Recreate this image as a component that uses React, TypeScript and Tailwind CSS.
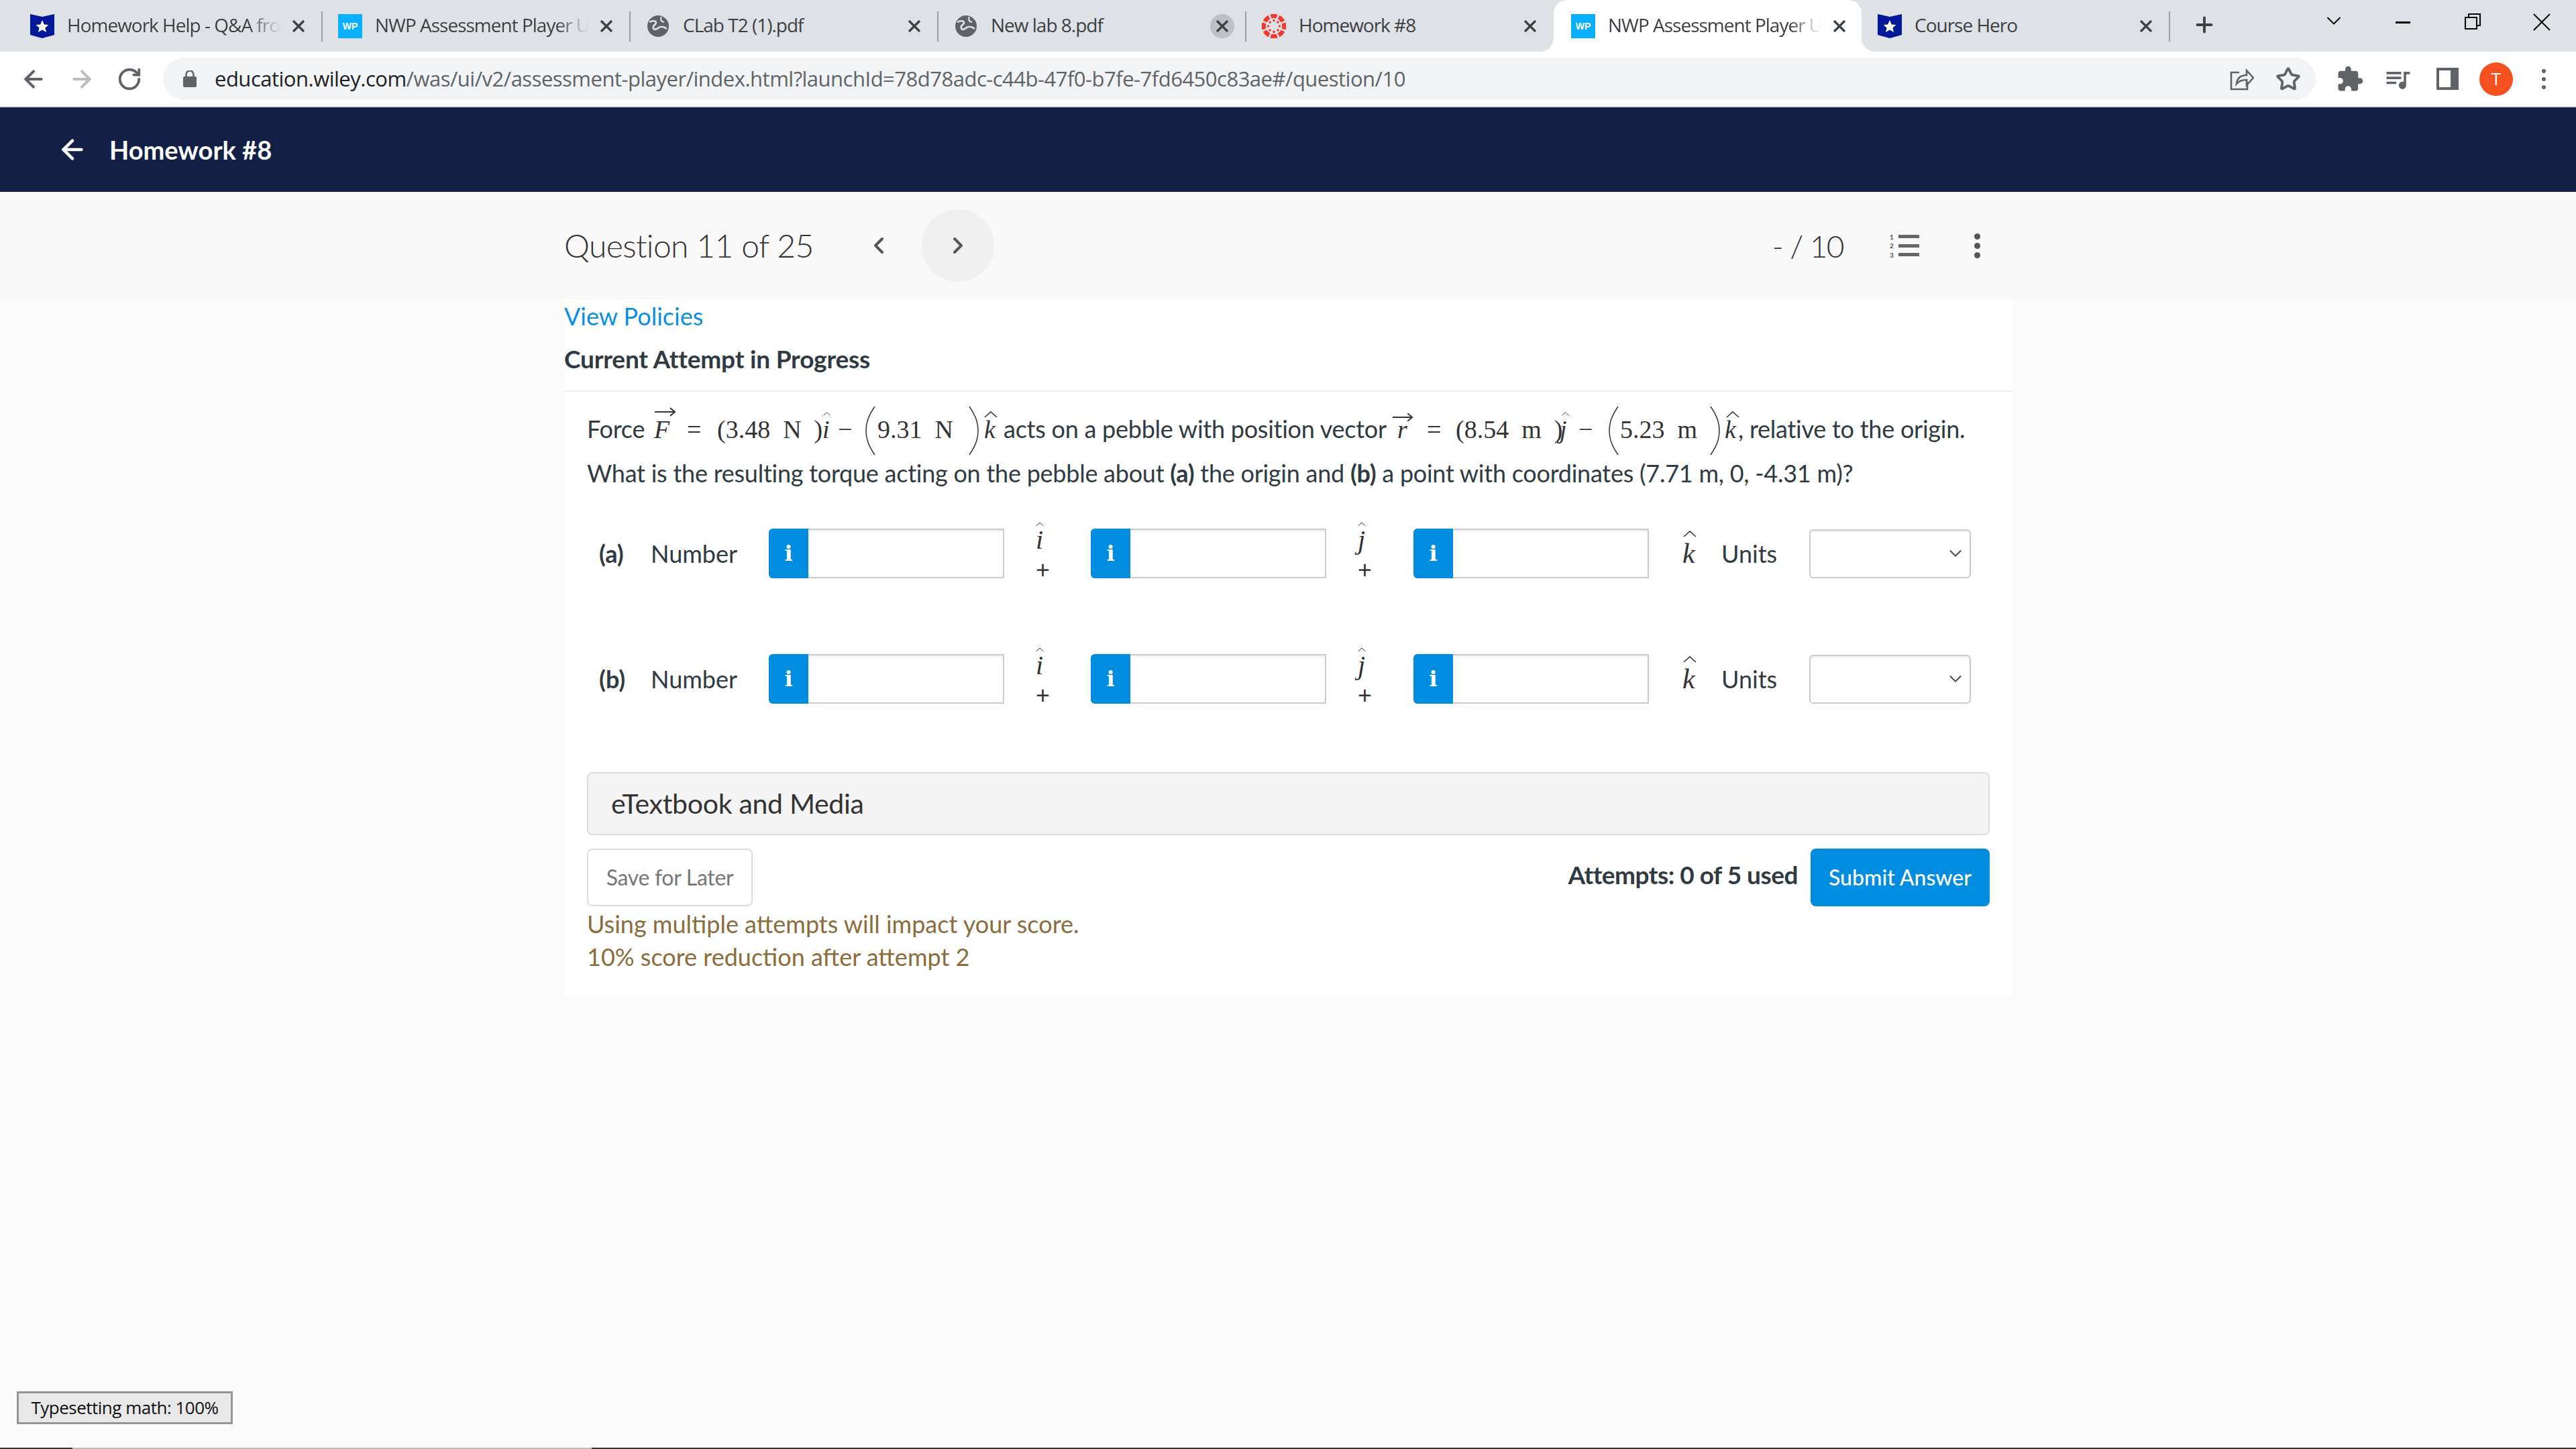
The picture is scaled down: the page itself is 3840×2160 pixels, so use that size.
import type { ReactNode } from 'react';
import { ArrowLeft, ArrowRight, ChevronDown, ChevronLeft, ChevronRight, Plus, RotateCw, Star } from 'lucide-react';
import { MdExtension, MdQueueMusic } from 'react-icons/md';

function Shield() {
  return (
    <svg viewBox="0 0 36 36" className="w-[36px] h-[36px] shrink-0">
      <polygon points="0,0 18,4 36,0 36,31 18,36 0,31" fill="#04189b" />
      <polygon points="18,9 20.8,15.4 27.5,16 22.4,20.4 24,27 18,23.5 12,27 13.6,20.4 8.5,16 15.2,15.4" fill="#fff" />
    </svg>
  );
}

function Wp() {
  return (
    <div className="w-[36px] h-[36px] shrink-0 bg-[#0ab0ff] flex items-center justify-center">
      <span className="text-white font-bold text-[14px] leading-none font-['Liberation_Sans',sans-serif]">WP</span>
    </div>
  );
}

function Globe() {
  return (
    <svg viewBox="0 0 32 32" className="w-[32px] h-[32px] ml-[2px] mr-[2px] shrink-0">
      <circle cx="16" cy="16" r="16" fill="#5f6368" />
      <path d="M3 10c5-3 10-2 10 1s-6 4-4 8c1 3 5 2 8-1 3-2 8-1 12 2" fill="none" stroke="#dee1e6" strokeWidth="2.6" />
      <path d="M21 2c-2 3-1 7 4 8" fill="none" stroke="#dee1e6" strokeWidth="2.2" />
    </svg>
  );
}

function Canvas() {
  const angles = [0, 45, 90, 135, 180, 225, 270, 315];
  return (
    <svg viewBox="-18 -18 36 36" className="w-[36px] h-[36px] shrink-0">
      {angles.map((a) => (
        <g key={a} transform={`rotate(${a})`}>
          <path d="M-5.5 -17.5 A18 18 0 0 1 5.5 -17.5 L3.6 -11.5 A12 12 0 0 0 -3.6 -11.5 Z" fill="#ee3a2f" />
          <circle cx="0" cy="-8.4" r="1.8" fill="#ee3a2f" />
        </g>
      ))}
    </svg>
  );
}

function CloseX() {
  return (
    <svg viewBox="0 0 20 20" className="w-[20px] h-[20px]">
      <path d="M2 2 18 18M18 2 2 18" stroke="#3c4043" strokeWidth="3.2" />
    </svg>
  );
}

function Tab({ icon, title, fade, active, hover, sep }: { icon: ReactNode; title: string; fade?: boolean; active?: boolean; hover?: boolean; sep?: boolean }) {
  return (
    <div className={active ? 'relative w-[459px] h-[77px] shrink-0 bg-white rounded-t-[20px] flex items-center pl-[26px]' : 'relative w-[459px] h-[77px] shrink-0 flex items-center pl-[24px]'}>
      {icon}
      <span className={fade ? "ml-[19px] pb-[3px] w-[318px] whitespace-nowrap text-[28px] tracking-[-1px] text-[#3c4043] [mask-image:linear-gradient(to_right,black_85%,transparent_100%)]" : 'ml-[19px] pb-[3px] w-[318px] whitespace-nowrap text-[28px] tracking-[-1px] text-[#3c4043]'}>
        {title}
      </span>
      <span className={hover ? 'ml-[9px] w-[36px] h-[36px] rounded-full bg-[#bdc1c6] flex items-center justify-center' : 'ml-[9px] w-[36px] h-[36px] flex items-center justify-center'}>
        <CloseX />
      </span>
      {sep && <span className="absolute right-[-1px] top-[17px] h-[45px] w-[2px] bg-[#9aa0a6]" />}
      {active && (
        <>
          <span className="absolute bottom-0 left-[-20px] w-[20px] h-[20px] bg-white">
            <span className="block w-full h-full bg-[#dee1e6] rounded-br-[20px]" />
          </span>
          <span className="absolute bottom-0 right-[-20px] w-[20px] h-[20px] bg-white">
            <span className="block w-full h-full bg-[#dee1e6] rounded-bl-[20px]" />
          </span>
        </>
      )}
    </div>
  );
}

function TabStrip() {
  return (
    <div className="h-[77px] bg-[#dee1e6] flex items-start pl-[21px] font-['Open_Sans',sans-serif]">
      <Tab icon={<Shield />} title="Homework Help - Q&A fro" fade sep />
      <Tab icon={<Wp />} title="NWP Assessment Player U" fade sep />
      <Tab icon={<Globe />} title="CLab T2 (1).pdf" sep />
      <Tab icon={<Globe />} title="New lab 8.pdf" hover sep />
      <Tab icon={<Canvas />} title="Homework #8" />
      <Tab icon={<Wp />} title="NWP Assessment Player U" fade active />
      <Tab icon={<Shield />} title="Course Hero" sep />
      <Plus className="ml-[34px] mt-[19px] w-[36px] h-[36px] text-[#3c4043]" strokeWidth={2.6} />
      <ChevronDown className="ml-[157px] mt-[13px] w-[36px] h-[36px] text-black" strokeWidth={1.3} />
      <div className="ml-[74px] mt-[32px] w-[22px] h-[3px] bg-black" />
      <svg viewBox="0 0 24 24" className="ml-[81px] mt-[20px] w-[24px] h-[24px]" fill="none" stroke="#000" strokeWidth="2">
        <rect x="1" y="6" width="17" height="17" />
        <path d="M6 6V1H23V18H18" />
      </svg>
      <svg viewBox="0 0 26 26" className="ml-[78px] mt-[20px] w-[26px] h-[26px]" stroke="#000" strokeWidth="2">
        <path d="M1 1 25 25M25 1 1 25" />
      </svg>
    </div>
  );
}

function Toolbar() {
  return (
    <div className="h-[83px] bg-white border-b-2 border-[#dadce0] flex items-start font-['Open_Sans',sans-serif]">
      <div className="flex items-center h-[81px] pl-[30px] gap-[32px] w-[243px]">
        <ArrowLeft className="w-[40px] h-[40px] text-[#5f6368]" strokeWidth={2.4} />
        <ArrowRight className="w-[40px] h-[40px] text-[#babcbe]" strokeWidth={2.4} />
        <RotateCw className="w-[38px] h-[38px] text-[#5f6368]" strokeWidth={2.4} />
      </div>
      <div className="mt-[9px] w-[3209px] h-[63px] bg-[#f1f3f4] rounded-full flex items-center pl-[30px]">
        <svg viewBox="0 0 20 25" className="w-[20px] h-[25px] shrink-0">
          <rect x="0" y="9" width="20" height="16" rx="2" fill="#5f6368" />
          <path d="M4.5 10V6a5.5 5.5 0 0 1 11 0v4" fill="none" stroke="#5f6368" strokeWidth="2.6" />
        </svg>
        <span className="ml-[27px] text-[31px] tracking-[-0.5px] text-[#5f6368] whitespace-nowrap">
          <span className="text-[#202124]">education.wiley.com</span>/was/ui/v2/assessment-player/index.html?launchId=78d78adc-c44b-47f0-b7fe-7fd6450c83ae#/question/10
        </span>
        <svg viewBox="0 0 36 34" className="ml-auto w-[36px] h-[34px]" fill="none" stroke="#5f6368" strokeWidth="2.6">
          <path d="M14 7H2V32H26V21" />
          <path d="M10 24c1-9 7-13 15-13V4l10 11-10 11v-8c-6 0-11 1-15 6Z" />
        </svg>
        <Star className="ml-[32px] mr-[22px] w-[38px] h-[38px] text-[#5f6368]" strokeWidth={2.4} />
      </div>
      <div className="flex items-center h-[81px] pl-[30px]">
        <MdExtension className="w-[42px] h-[42px] text-[#5f6368]" />
        <MdQueueMusic className="ml-[28px] w-[44px] h-[44px] text-[#5f6368]" />
        <div className="ml-[36px] w-[33px] h-[33px] border-[4px] border-r-[12px] border-[#5f6368] bg-white" />
        <div className="ml-[31px] w-[50px] h-[50px] rounded-full bg-[#f4511e] flex items-center justify-center text-white text-[26px]">T</div>
        <div className="ml-[43px] flex flex-col gap-[6px]">
          <span className="w-[6px] h-[6px] rounded-full bg-[#5f6368]" />
          <span className="w-[6px] h-[6px] rounded-full bg-[#5f6368]" />
          <span className="w-[6px] h-[6px] rounded-full bg-[#5f6368]" />
        </div>
      </div>
    </div>
  );
}

function NavBar() {
  return (
    <div className="h-[126px] bg-[#141f45] flex items-center pl-[85px] text-white">
      <ArrowLeft className="w-[46px] h-[46px]" strokeWidth={2.4} />
      <span className="ml-[32px] text-[38px] font-bold">Homework #8</span>
    </div>
  );
}

function QuestionHeader() {
  return (
    <div className="h-[160px] bg-[#f8f8f8]">
      <div className="ml-[841px] w-[2159px] h-full flex items-center text-[#4a4a4a]">
        <span className="text-[48px] font-light text-[#333] tracking-[-0.6px]">Question 11 of 25</span>
        <ChevronLeft className="ml-[77px] w-[40px] h-[40px] text-[#555]" strokeWidth={2.4} />
        <div className="ml-[44px] w-[108px] h-[108px] rounded-full bg-[#f0f0f0] flex items-center justify-center">
          <ChevronRight className="w-[40px] h-[40px] text-[#555]" strokeWidth={2.4} />
        </div>
        <span className="ml-auto text-[46px] font-light text-[#333] tracking-[-1.5px]">- / 10</span>
        <div className="ml-[69px] w-[44px] h-[36px] flex flex-col justify-between">
          {['1', '2', '3'].map((n) => (
            <div key={n} className="flex items-center h-[9px]">
              <span className="w-[13px] text-[10px] leading-none font-bold text-[#555]">{n}</span>
              <span className="flex-1 h-[5px] bg-[#666]" />
            </div>
          ))}
        </div>
        <div className="ml-[82px] mr-[48px] flex flex-col gap-[5px]">
          <span className="w-[9px] h-[9px] rounded-full bg-[#555]" />
          <span className="w-[9px] h-[9px] rounded-full bg-[#555]" />
          <span className="w-[9px] h-[9px] rounded-full bg-[#555]" />
        </div>
      </div>
    </div>
  );
}

function Hat({ className }: { className: string }) {
  return (
    <svg viewBox="0 0 20 10" className={`absolute ${className}`} fill="none" stroke="#333" strokeWidth="1.6">
      <path d="M1 9 10 1 19 9" />
    </svg>
  );
}

function VecArrow({ className }: { className: string }) {
  return (
    <svg viewBox="0 0 32 14" className={`absolute ${className}`} fill="none" stroke="#333" strokeWidth="2">
      <path d="M0 7H30M23 1l7 6-7 6" />
    </svg>
  );
}

function BigParen({ right }: { right?: boolean }) {
  return (
    <span className="relative inline-block w-[18px] h-[1px]">
      <svg viewBox="0 0 16 72" className="absolute left-0 top-[-46px] w-[16px] h-[72px]" fill="none" stroke="#333" strokeWidth="1.5">
        <path d={right ? 'M1 0C12 16 14 26 14 36S12 56 1 72' : 'M15 0C4 16 2 26 2 36S4 56 15 72'} />
      </svg>
    </span>
  );
}

function Serif({ children, className }: { children: ReactNode; className: string }) {
  return <span className={`font-['Liberation_Serif',serif] text-[38px] text-[#333] whitespace-pre tracking-normal ${className}`}>{children}</span>;
}

function ProblemText() {
  return (
    <div className="pt-[22px] pl-[34px] text-[36px] text-[#2f3a43] leading-[66px] tracking-[-0.25px]">
      <div className="flex items-baseline h-[66px] whitespace-pre">
        <span className="w-[100px]">Force</span>
        <Serif className="relative italic w-[49px]">
          F
          <VecArrow className="left-[1px] top-[0px] w-[32px] h-[14px]" />
        </Serif>
        <Serif className="w-[45px]">=</Serif>
        <Serif className="w-[157px]">(3.48  N  )</Serif>
        <Serif className="relative italic w-[23px]">
          i
          <Hat className="left-[1px] top-[6px] w-[11px] h-[8px]" />
        </Serif>
        <Serif className="w-[40px]">−</Serif>
        <BigParen />
        <Serif className="w-[136px] ml-[1px]">9.31  N</Serif>
        <BigParen right />
        <Serif className="relative italic ml-[5px] w-[29px]">
          k
          <Hat className="left-[0px] top-[6px] w-[20px] h-[10px]" />
        </Serif>
        <span className="w-[587px]">acts on a pebble with position vector</span>
        <Serif className="relative italic w-[44px]">
          r
          <VecArrow className="left-[-7px] top-[8px] w-[31px] h-[14px]" />
        </Serif>
        <Serif className="w-[43px]">=</Serif>
        <Serif className="w-[155px]">(8.54  m  )</Serif>
        <Serif className="relative italic w-[28px]">
          j
          <Hat className="left-[3px] top-[6px] w-[11px] h-[8px]" />
        </Serif>
        <Serif className="w-[44px]">−</Serif>
        <BigParen />
        <Serif className="w-[134px]">5.23  m</Serif>
        <BigParen right />
        <Serif className="relative italic ml-[4px] w-[20px]">
          k
          <Hat className="left-[2px] top-[6px] w-[20px] h-[10px]" />
        </Serif>
        <span>, relative to the origin.</span>
      </div>
      <div className="h-[66px] whitespace-nowrap">
        What is the resulting torque acting on the pebble about <b>(a)</b> the origin and <b>(b)</b> a point with coordinates (7.71 m, 0, -4.31 m)?
      </div>
    </div>
  );
}

function NumberInput() {
  return (
    <div className="flex w-[351px] h-[74px] shrink-0 border-2 border-[#ccc] rounded-l-[6px] bg-white shadow-[inset_0_2px_2px_rgba(0,0,0,0.08)] box-border">
      <div className="w-[59px] -m-[2px] mr-0 bg-[#008de0] rounded-l-[6px] flex items-center justify-center">
        <span className="text-white font-bold text-[32px] leading-none font-['DejaVu_Serif',serif]">i</span>
      </div>
    </div>
  );
}

function UnitVector({ letter, wide }: { letter: string; wide?: boolean }) {
  return (
    <div className={wide ? '-mt-[11px] w-[130px] h-[85px] shrink-0 pl-[47px] flex flex-col justify-between' : '-mt-[11px] w-[129px] h-[85px] shrink-0 pl-[47px] flex flex-col justify-between'}>
      <span className="relative block h-[50px] pt-[6px] leading-[44px] font-['Liberation_Serif',serif] italic text-[40px] text-[#333]">
        {letter}
        <Hat className="left-[0px] top-[0px] w-[12px] h-[9px]" />
      </span>
      <span className="text-[36px] leading-[28px] text-[#333]">+</span>
    </div>
  );
}

function AnswerRow({ label, className }: { label: string; className: string }) {
  return (
    <div className={`flex items-center pl-[52px] text-[36px] text-[#2f3a43] ${className}`}>
      <b className="w-[77px]">{label}</b>
      <span className="w-[176px]">Number</span>
      <NumberInput />
      <UnitVector letter="i" />
      <NumberInput />
      <UnitVector letter="j" wide />
      <NumberInput />
      <span className="relative ml-[50px] w-[58px] font-['Liberation_Serif',serif] italic text-[42px] text-[#333]">
        k
        <Hat className="left-[0px] top-[-3px] w-[22px] h-[10px]" />
      </span>
      <span className="w-[131px]">Units</span>
      <div className="w-[241px] h-[73px] border-2 border-[#ccc] rounded-[6px] shadow-[inset_0_2px_2px_rgba(0,0,0,0.08)] flex items-center justify-end pr-[6px]">
        <ChevronDown className="w-[30px] h-[30px] text-[#555]" strokeWidth={1.8} />
      </div>
    </div>
  );
}

function Card() {
  return (
    <div className="ml-[841px] w-[2159px] h-[1040px] bg-white font-['Lato',sans-serif]">
      <div className="h-[54px] pb-[4px] flex items-center text-[36px] text-[#0a8fe3]">View Policies</div>
      <div className="h-[82px] pb-[12px] flex items-center text-[37px] font-bold text-[#2f3a43] tracking-[-0.2px]">Current Attempt in Progress</div>
      <div className="h-[2px] bg-[#eeeeee]" />
      <ProblemText />
      <AnswerRow label="(a)" className="mt-[50px]" />
      <AnswerRow label="(b)" className="mt-[113px]" />
      <div className="mx-[34px] mt-[102px] h-[94px] bg-[#f4f4f4] border-2 border-[#dddddd] rounded-[8px] flex items-center pl-[34px] text-[41px] text-[#333] tracking-[-0.3px]">
        eTextbook and Media
      </div>
      <div className="mx-[34px] mt-[20px] flex items-start">
        <div className="w-[247px] h-[86px] border-2 border-[#dddddd] rounded-[8px] flex items-center justify-center text-[32px] text-[#777] tracking-[-0.3px]">
          Save for Later
        </div>
        <span className="ml-auto mt-[11px] text-[37px] font-bold text-[#2f3a43] tracking-[-0.5px]">Attempts: 0 of 5 used</span>
        <div className="ml-[19px] w-[267px] h-[86px] bg-[#008de0] rounded-[8px] flex items-center justify-center text-[32px] text-white font-medium">
          Submit Answer
        </div>
      </div>
      <div className="px-[34px] mt-[2px] text-[36px] leading-[49px] text-[#8a6d3b]">
        <div>Using multiple attempts will impact your score.</div>
        <div>10% score reduction after attempt 2</div>
      </div>
    </div>
  );
}

export default function App() {
  return (
    <div className="relative w-[3840px] h-[2160px] overflow-hidden bg-[#fbfbfb] font-['Lato',sans-serif]">
      <TabStrip />
      <Toolbar />
      <NavBar />
      <QuestionHeader />
      <Card />
      <div className="absolute left-[25px] top-[2074px] w-[322px] h-[49px] bg-[#e8e8e8] border-[3px] border-[#959595] flex items-center justify-center text-[26px] text-[#111] font-['Open_Sans',sans-serif] tracking-[-0.5px]">
        Typesetting math: 100%
      </div>
      <div className="absolute left-0 bottom-0 w-full h-[2px] bg-[#333] flex">
        <div className="ml-[108px] w-[774px] bg-[#bbb]" />
      </div>
    </div>
  );
}
